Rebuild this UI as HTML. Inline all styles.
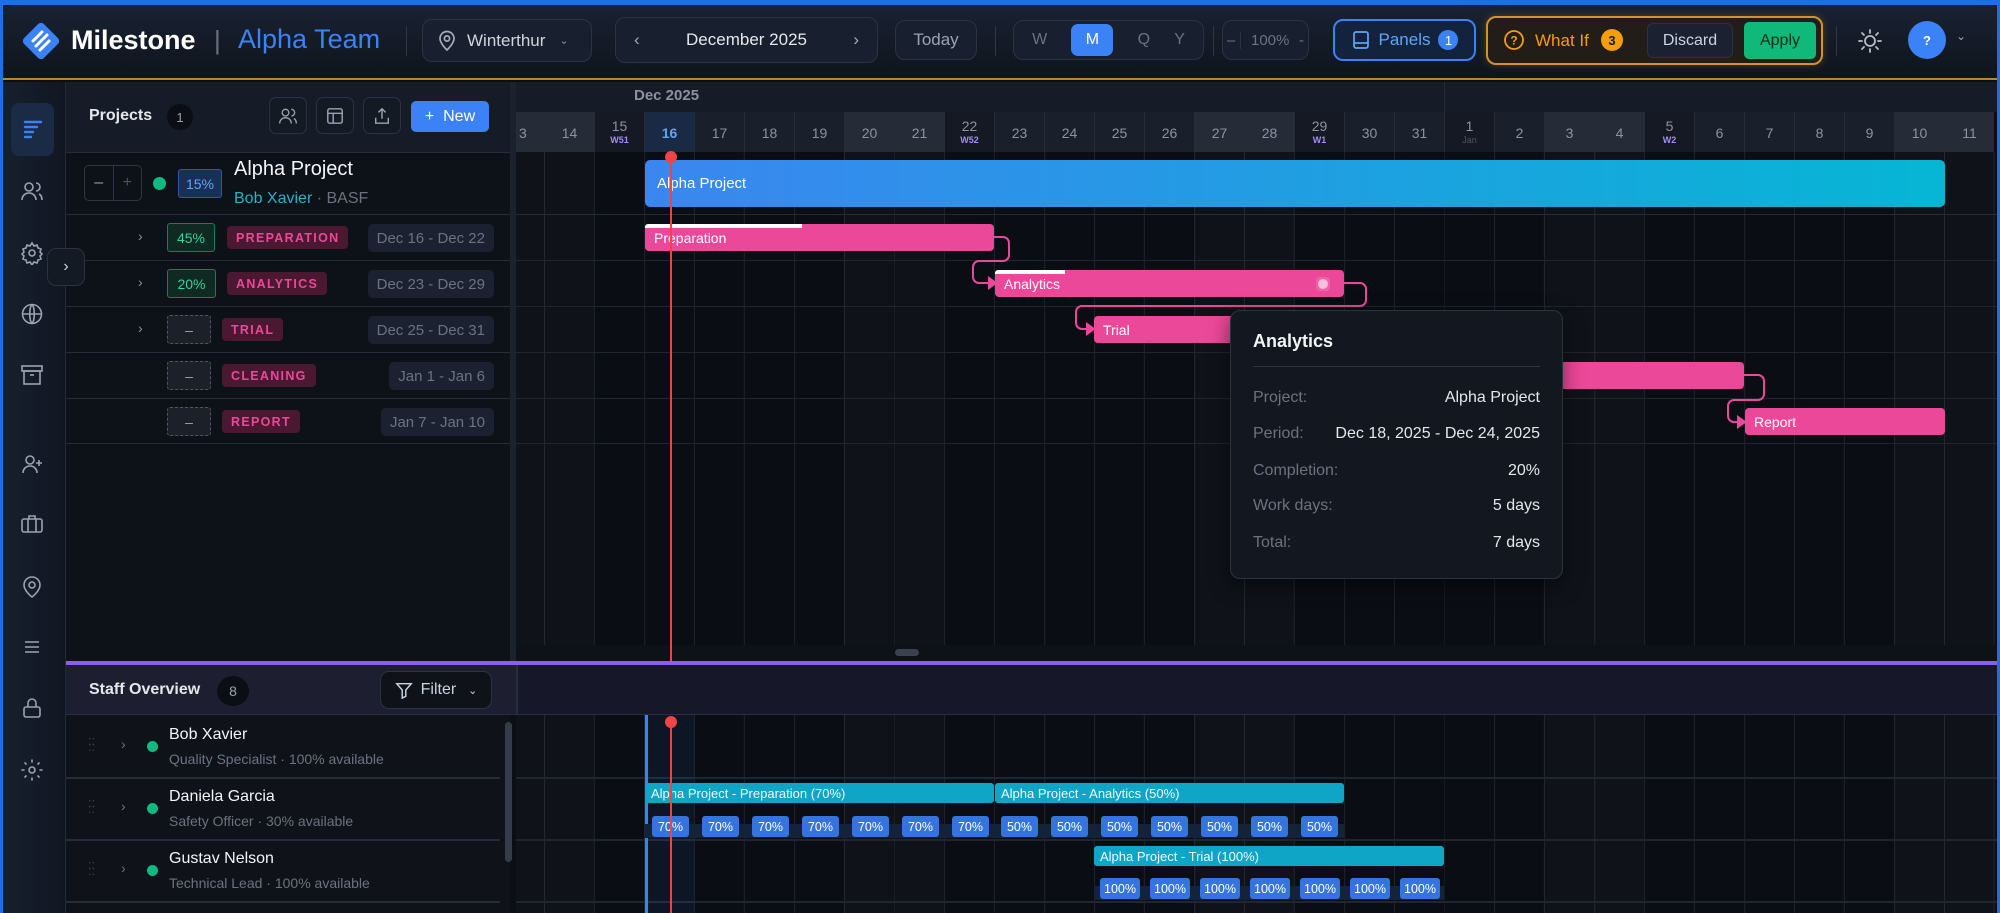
<!DOCTYPE html>
<html><head><meta charset="utf-8">
<style>
*{box-sizing:border-box;margin:0;padding:0}
body{width:2000px;height:913px;overflow:hidden;background:#0b0e14;font-family:"Liberation Sans",sans-serif;color:#e5e7eb;position:relative}
.a{position:absolute}
.btn{position:absolute;border:1px solid #2a3344;border-radius:10px;background:#182030;display:flex;align-items:center;justify-content:center;color:#d1d5db;font-size:17px}
.hc{position:absolute;top:112px;height:40px;width:50px;border-left:1px solid #262d3a;text-align:center;color:#8b93a3;font-size:14px;padding-top:13px;background:#1a202b}
.hc.we{background:#262c37}
.hc.wk{background:#141923;padding-top:6px}
.hc small{display:block;font-size:9px;color:#a78bfa;font-weight:bold;margin-top:1px}
.tag{position:absolute;height:23px;border-radius:4px;background:#4a1830;color:#ec4899;font-size:12.5px;font-weight:bold;letter-spacing:1.3px;display:flex;align-items:center;padding:0 9px}
.pct{position:absolute;height:29px;border:1px solid #16804f;border-radius:3px;background:#0f2a22;color:#34d399;font-size:14px;display:flex;align-items:center;justify-content:center}
.dash{position:absolute;height:29px;width:44px;border:1px dashed #4b5563;border-radius:3px;background:#1c2029;color:#9ca3af;display:flex;align-items:center;justify-content:center;font-size:14px}
.date{position:absolute;height:28px;border-radius:5px;background:#1b2130;color:#6b7280;font-size:15px;display:flex;align-items:center;padding:0 9px;right:1506px;white-space:nowrap}
.chev{position:absolute;left:138px;color:#8b93a3;font-size:14px}
.row{position:absolute;left:66px;width:444px;height:1px;background:#262d3a}
.bar{position:absolute;height:27px;border-radius:4px;background:#ec4899;color:#fff;font-size:14px;display:flex;align-items:center;padding-left:9px}
.sb{position:absolute;height:20px;border-radius:3px;background:#0ea5c6;color:#f0fbff;font-size:13px;display:flex;align-items:center;padding-left:6px}
.ch{position:absolute;width:37px;height:21px;border-radius:3px;background:#3574dc;color:#fff;font-size:12.5px;display:flex;align-items:center;justify-content:center}
.tt{position:absolute;left:1253px;width:287px;font-size:16px;display:flex;justify-content:space-between}
.tt span:first-child{color:#6b7280}
.sic{position:absolute;left:20px;width:24px;height:24px}
</style></head><body>
<div class="a" style="left:0;top:0;width:2000px;height:913px;border:3px solid #1f6fe0;border-top-width:5px;border-bottom:0;z-index:50;pointer-events:none"></div>
<div class="a" style="left:0;top:0;width:2000px;height:80px;background:linear-gradient(#1a2334,#0f141c);border-bottom:2px solid #b7862d"></div>
<svg class="a" style="left:20px;top:20px" width="42" height="42" viewBox="0 0 42 42"><rect x="7" y="7" width="28" height="28" rx="4" transform="rotate(45 21 21)" fill="#3b82f6"/><path d="M13 21l9-9M16 26l11-11M20 30l9-9" stroke="#fff" stroke-width="3" stroke-linecap="round"/></svg>
<div class="a" style="left:71px;top:25px;font-size:27px;font-weight:bold;color:#fff">Milestone</div>
<div class="a" style="left:214px;top:25px;font-size:26px;color:#6b7280">|</div>
<div class="a" style="left:238px;top:24px;font-size:27px;color:#3b82f6">Alpha Team</div>
<div class="a" style="left:406px;top:26px;width:1px;height:30px;background:#2f3745"></div>
<div class="btn" style="left:422px;top:19px;width:170px;height:43px;justify-content:flex-start;padding-left:14px"><svg width="20" height="22" viewBox="0 0 20 22"><path d="M10 20s7-6.5 7-11.5a7 7 0 0 0-14 0C3 13.5 10 20 10 20z" fill="none" stroke="#aab" stroke-width="1.7"/><circle cx="10" cy="8.5" r="2.6" fill="none" stroke="#aab" stroke-width="1.7"/></svg><span style="margin-left:10px">Winterthur</span><span style="margin-left:14px;font-size:11px;color:#8b93a3">&#8964;</span></div>
<div class="btn" style="left:615px;top:17px;width:263px;height:46px;justify-content:space-between;padding:0 18px"><span style="color:#aab">&#8249;</span><span style="color:#e5e7eb">December 2025</span><span style="color:#aab">&#8250;</span></div>
<div class="btn" style="left:895px;top:20px;width:82px;height:40px;color:#9ca3af">Today</div>
<div class="a" style="left:995px;top:26px;width:1px;height:30px;background:#2f3745"></div>
<div class="btn" style="left:1013px;top:20px;width:191px;height:40px;justify-content:space-around;color:#6b7280;font-size:16px;padding:0 6px"><span>W</span><span style="background:#3b82f6;color:#fff;border-radius:7px;width:42px;height:32px;display:flex;align-items:center;justify-content:center">M</span><span>Q</span><span>Y</span></div>
<div class="a" style="left:1213px;top:26px;width:1px;height:30px;background:#2f3745"></div>
<div class="btn" style="left:1222px;top:20px;width:87px;height:40px;font-size:15px;color:#6b7280;justify-content:space-between;padding:0 4px"><span style="border-right:1px solid #2a3344;padding-right:5px">&#8211;</span><span>100%</span><span>-</span></div>
<div class="btn" style="left:1333px;top:19px;width:143px;height:42px;border:2px solid #3b82f6;background:#14233d;color:#60a5fa;font-size:17px"><svg width="20" height="20" viewBox="0 0 20 20" style="margin-right:8px"><rect x="3" y="2" width="14" height="16" rx="2" fill="none" stroke="#60a5fa" stroke-width="1.7"/><path d="M3 13h14" stroke="#60a5fa" stroke-width="1.7"/></svg>Panels<span style="margin-left:8px;background:#3b82f6;color:#fff;border-radius:50%;width:20px;height:20px;font-size:13px;display:flex;align-items:center;justify-content:center">1</span></div>
<div class="a" style="left:1486px;top:16px;width:337px;height:49px;border:2px solid #d4932a;border-radius:10px;background:#221d18;box-shadow:0 0 8px rgba(212,147,42,.3)"></div>
<svg class="a" style="left:1503px;top:29px" width="22" height="22" viewBox="0 0 22 22"><circle cx="11" cy="11" r="9" fill="none" stroke="#f59e0b" stroke-width="1.8"/><text x="11" y="15.5" text-anchor="middle" font-size="12" font-weight="bold" fill="#f59e0b" font-family="Liberation Sans">?</text></svg>
<div class="a" style="left:1535px;top:31px;font-size:17px;color:#f59e0b">What If</div>
<div class="a" style="left:1601px;top:29px;width:22px;height:22px;border-radius:50%;background:#f59e0b;color:#1a1a1a;font-size:13px;font-weight:bold;display:flex;align-items:center;justify-content:center">3</div>
<div class="btn" style="left:1647px;top:23px;width:86px;height:35px;border-radius:6px;background:#1b2130;font-size:16px;color:#cbd5e1">Discard</div>
<div class="a" style="left:1744px;top:22px;width:72px;height:37px;border-radius:5px;background:#10b97a;color:#062b1c;font-size:16px;display:flex;align-items:center;justify-content:center">Apply</div>
<div class="a" style="left:1836px;top:26px;width:1px;height:30px;background:#2f3745"></div>
<svg class="a" style="left:1857px;top:28px" width="26" height="26" viewBox="0 0 26 26" stroke="#b8bec9" stroke-width="1.8" fill="none"><circle cx="13" cy="13" r="5"/><path d="M13 2v3M13 21v3M2 13h3M21 13h3M5 5l2 2M19 19l2 2M5 21l2-2M19 7l2-2" stroke-linecap="round"/></svg>
<div class="a" style="left:1908px;top:21px;width:38px;height:38px;border-radius:50%;background:#3b82f6;color:#fff;font-size:13px;font-weight:bold;display:flex;align-items:center;justify-content:center">?</div>
<div class="a" style="left:1956px;top:29px;font-size:12px;color:#9ca3af">&#8964;</div>

<div class="a" style="left:0;top:82px;width:66px;height:831px;background:linear-gradient(90deg,#17202f,#111722);border-right:1px solid #222a36"></div>
<div class="a" style="left:11px;top:103px;width:43px;height:53px;border-radius:8px;background:#1b2b45"></div>
<svg class="a" style="left:21px;top:117px" width="24" height="24" viewBox="0 0 24 24" stroke="#3b82f6" stroke-width="2.4" stroke-linecap="round"><path d="M4 5h16M4 10h12M4 15h8M4 20h6"/></svg>
<svg class="sic" style="top:179px" viewBox="0 0 24 24" fill="none" stroke="#9aa3b2" stroke-width="1.6"><circle cx="9" cy="8" r="4"/><path d="M2 21c0-4 3-7 7-7s7 3 7 7M16 4a4 4 0 0 1 0 8M19 15c2 1 3 3 3 6"/></svg>
<svg class="sic" style="top:241px" viewBox="0 0 24 24" fill="none" stroke="#9aa3b2" stroke-width="1.6"><circle cx="12" cy="12" r="3"/><path d="M12 2l2 3 3-1 1 3 3 1-1 3 2 2-2 2 1 3-3 1-1 3-3-1-2 3-2-3-3 1-1-3-3-1 1-3-2-2 2-2-1-3 3-1 1-3 3 1z"/></svg>
<svg class="sic" style="top:302px" viewBox="0 0 24 24" fill="none" stroke="#9aa3b2" stroke-width="1.6"><circle cx="12" cy="12" r="9.5"/><path d="M2.5 12h19M12 2.5c3 3 3 16 0 19M12 2.5c-3 3-3 16 0 19"/></svg>
<svg class="sic" style="top:363px" viewBox="0 0 24 24" fill="none" stroke="#9aa3b2" stroke-width="1.6"><rect x="2" y="3" width="20" height="5"/><rect x="4" y="8" width="16" height="13"/><path d="M10 12h4"/></svg>
<svg class="sic" style="top:452px" viewBox="0 0 24 24" fill="none" stroke="#9aa3b2" stroke-width="1.6"><circle cx="10" cy="8" r="4"/><path d="M3 21c0-4 3-7 7-7s7 3 7 7M19 8v6M16 11h6"/></svg>
<svg class="sic" style="top:512px" viewBox="0 0 24 24" fill="none" stroke="#9aa3b2" stroke-width="1.6"><rect x="2" y="7" width="20" height="13" rx="2"/><path d="M9 7V4h6v3M8 7v13M16 7v13"/></svg>
<svg class="sic" style="top:575px" viewBox="0 0 24 24" fill="none" stroke="#9aa3b2" stroke-width="1.6"><path d="M12 22s8-6 8-12a8 8 0 0 0-16 0c0 6 8 12 8 12z"/><circle cx="12" cy="10" r="3"/></svg>
<svg class="sic" style="top:635px" viewBox="0 0 24 24" fill="none" stroke="#9aa3b2" stroke-width="1.6"><path d="M5 7h14M5 12h14M5 17h14"/></svg>
<svg class="sic" style="top:696px" viewBox="0 0 24 24" fill="none" stroke="#9aa3b2" stroke-width="1.6"><rect x="4" y="11" width="16" height="10" rx="2"/><path d="M8 11V7a4 4 0 0 1 8 0v4"/></svg>
<svg class="sic" style="top:758px" viewBox="0 0 24 24" fill="none" stroke="#9aa3b2" stroke-width="1.6"><circle cx="12" cy="12" r="3"/><path d="M12 2v2M12 20v2M2 12h2M20 12h2M5 5l1 1M18 18l1 1M5 19l1-1M18 6l1-1" stroke-linecap="round"/></svg>

<div class="a" style="left:66px;top:82px;width:446px;height:70px;background:#161c27"></div>
<div class="a" style="left:66px;top:152px;width:446px;height:509px;background:#0d1118"></div>
<div class="a" style="left:510px;top:82px;width:6px;height:583px;background:#1c222d"></div>
<div class="a" style="left:89px;top:107px;font-size:16px;font-weight:bold;color:#e5e7eb">Projects</div>
<div class="a" style="left:167px;top:104px;width:26px;height:26px;border-radius:50%;background:#0b0e14;color:#9ca3af;font-size:13px;display:flex;align-items:center;justify-content:center">1</div>
<div class="btn" style="left:269px;top:97px;width:38px;height:37px;background:#141a24;border-radius:7px"><svg width="20" height="20" viewBox="0 0 24 24" fill="none" stroke="#9aa3b2" stroke-width="1.6"><circle cx="9" cy="8" r="4"/><path d="M2 21c0-4 3-7 7-7s7 3 7 7M16 4a4 4 0 0 1 0 8M19 15c2 1 3 3 3 6"/></svg></div>
<div class="btn" style="left:316px;top:97px;width:38px;height:37px;background:#141a24;border-radius:7px"><svg width="18" height="18" viewBox="0 0 20 20" fill="none" stroke="#9aa3b2" stroke-width="1.6"><rect x="2" y="2" width="16" height="16" rx="2"/><path d="M2 7h16M8 7v11"/></svg></div>
<div class="btn" style="left:363px;top:97px;width:38px;height:37px;background:#141a24;border-radius:7px"><svg width="18" height="18" viewBox="0 0 20 20" fill="none" stroke="#9aa3b2" stroke-width="1.6"><path d="M10 13V2M6 6l4-4 4 4M3 12v6h14v-6"/></svg></div>
<div class="a" style="left:411px;top:101px;width:78px;height:31px;border-radius:5px;background:#3b82f6;color:#fff;font-size:16px;display:flex;align-items:center;justify-content:center">+&nbsp; New</div>
<div class="row" style="top:152px"></div>
<div class="a" style="left:84px;top:165px;width:58px;height:36px;border:1px solid #2e3644;border-radius:5px;display:flex;color:#9ca3af;font-size:16px"><span style="flex:1;text-align:center;line-height:33px;border-right:1px solid #2e3644">&#8211;</span><span style="flex:1;text-align:center;line-height:33px;color:#4b5563">+</span></div>
<div class="a" style="left:153px;top:177px;width:13px;height:13px;border-radius:50%;background:#10b981"></div>
<div class="a" style="left:178px;top:169px;width:44px;height:29px;border:1px solid #2d5aa8;border-radius:3px;background:#1a2f55;color:#60a5fa;font-size:14px;display:flex;align-items:center;justify-content:center">15%</div>
<div class="a" style="left:234px;top:158px;font-size:20px;color:#f3f4f6">Alpha Project</div>
<div class="a" style="left:234px;top:190px;font-size:16px;color:#22b5c8">Bob Xavier <span style="color:#6b7280">· BASF</span></div>
<div class="row" style="top:214px"></div>
<div class="row" style="top:260px"></div>
<div class="row" style="top:306px"></div>
<div class="row" style="top:352px"></div>
<div class="row" style="top:398px"></div>
<div class="row" style="top:443px"></div>
<div class="chev" style="top:228px">&#8250;</div>
<div class="chev" style="top:274px">&#8250;</div>
<div class="chev" style="top:320px">&#8250;</div>
<div class="pct" style="left:167px;top:223px;width:48px">45%</div>
<div class="pct" style="left:167px;top:269px;width:49px">20%</div>
<div class="dash" style="left:167px;top:315px">&#8211;</div>
<div class="dash" style="left:167px;top:361px">&#8211;</div>
<div class="dash" style="left:167px;top:407px">&#8211;</div>
<div class="tag" style="left:227px;top:226px">PREPARATION</div>
<div class="tag" style="left:227px;top:272px">ANALYTICS</div>
<div class="tag" style="left:222px;top:318px">TRIAL</div>
<div class="tag" style="left:222px;top:364px">CLEANING</div>
<div class="tag" style="left:222px;top:410px">REPORT</div>
<div class="date" style="top:224px">Dec 16 - Dec 22</div>
<div class="date" style="top:270px">Dec 23 - Dec 29</div>
<div class="date" style="top:316px">Dec 25 - Dec 31</div>
<div class="date" style="top:362px">Jan 1 - Jan 6</div>
<div class="date" style="top:408px">Jan 7 - Jan 10</div>
<div class="btn" style="left:47px;top:248px;width:38px;height:38px;background:#141a24;border-radius:9px;font-size:16px;color:#d1d5db">&#8250;</div>

<div class="a" style="left:516px;top:152px;width:1484px;height:761px;background:#0a0d13 repeating-linear-gradient(90deg,#1d232e 0 1px,transparent 1px 50px);background-position:28px 0;overflow:hidden"></div>
<div class="a" style="left:516px;top:152px;width:78px;height:761px;background:rgba(255,255,255,.025)"></div>
<div class="a" style="left:844px;top:152px;width:100px;height:761px;background:rgba(255,255,255,.025)"></div>
<div class="a" style="left:1194px;top:152px;width:100px;height:761px;background:rgba(255,255,255,.025)"></div>
<div class="a" style="left:1544px;top:152px;width:100px;height:761px;background:rgba(255,255,255,.025)"></div>
<div class="a" style="left:1894px;top:152px;width:100px;height:761px;background:rgba(255,255,255,.025)"></div>
<div class="a" style="left:516px;top:214px;width:1484px;height:1px;background:#252c38"></div>
<div class="a" style="left:516px;top:260px;width:1484px;height:1px;background:#1f2632"></div>
<div class="a" style="left:516px;top:306px;width:1484px;height:1px;background:#1f2632"></div>
<div class="a" style="left:516px;top:352px;width:1484px;height:1px;background:#1f2632"></div>
<div class="a" style="left:516px;top:398px;width:1484px;height:1px;background:#1f2632"></div>
<div class="a" style="left:516px;top:443px;width:1484px;height:1px;background:#1f2632"></div>
<div class="a" style="left:516px;top:645px;width:1484px;height:16px;background:#0d1118"></div>
<div class="a" style="left:895px;top:649px;width:24px;height:7px;border-radius:4px;background:#3a4250"></div>
<div class="a" style="left:516px;top:82px;width:1484px;height:30px;background:#161c27"></div>
<div class="a" style="left:1444px;top:82px;width:1px;height:30px;background:#262d3a"></div>
<div class="a" style="left:634px;top:87px;font-size:15px;font-weight:bold;color:#8b93a3">Dec 2025</div>
<div style="position:absolute;left:0;top:0">
<div class="hc we" style="left:516px;width:28px;text-align:left;padding-left:2px">3</div>
<div class="hc we" style="left:544px">14</div>
<div class="hc wk" style="left:594px">15<small>W51</small></div>
<div class="hc" style="left:644px;background:#1b2a44;color:#60a5fa;font-weight:bold">16</div>
<div class="hc" style="left:694px">17</div>
<div class="hc" style="left:744px">18</div>
<div class="hc" style="left:794px">19</div>
<div class="hc we" style="left:844px">20</div>
<div class="hc we" style="left:894px">21</div>
<div class="hc wk" style="left:944px">22<small>W52</small></div>
<div class="hc" style="left:994px">23</div>
<div class="hc" style="left:1044px">24</div>
<div class="hc" style="left:1094px">25</div>
<div class="hc" style="left:1144px">26</div>
<div class="hc we" style="left:1194px">27</div>
<div class="hc we" style="left:1244px">28</div>
<div class="hc wk" style="left:1294px">29<small>W1</small></div>
<div class="hc" style="left:1344px">30</div>
<div class="hc" style="left:1394px">31</div>
<div class="hc wk" style="left:1444px">1<small style="color:#4b5563;font-weight:normal">Jan</small></div>
<div class="hc" style="left:1494px">2</div>
<div class="hc we" style="left:1544px">3</div>
<div class="hc we" style="left:1594px">4</div>
<div class="hc wk" style="left:1644px">5<small>W2</small></div>
<div class="hc" style="left:1694px">6</div>
<div class="hc" style="left:1744px">7</div>
<div class="hc" style="left:1794px">8</div>
<div class="hc" style="left:1844px">9</div>
<div class="hc we" style="left:1894px">10</div>
<div class="hc we" style="left:1944px">11</div>
</div>
<div class="a" style="left:645px;top:160px;width:1300px;height:47px;border-radius:5px;background:linear-gradient(90deg,#3b86f0,#06b6d4);color:#fff;font-size:15px;display:flex;align-items:center;padding-left:12px">Alpha Project</div>
<div class="bar" style="left:645px;top:224px;width:349px">Preparation</div>
<div class="a" style="left:645px;top:224px;width:157px;height:4px;background:#fff;border-radius:3px 0 0 0"></div>
<div class="bar" style="left:995px;top:270px;width:349px">Analytics</div>
<div class="a" style="left:995px;top:270px;width:70px;height:4px;background:#fff;border-radius:3px 0 0 0"></div>
<div class="a" style="left:1316px;top:277px;width:14px;height:14px;border-radius:4px;background:rgba(255,255,255,.15)"><div style="margin:2px;width:10px;height:10px;border-radius:50%;background:#f9c0dc"></div></div>
<div class="bar" style="left:1094px;top:316px;width:350px">Trial</div>
<div class="bar" style="left:1444px;top:362px;width:300px"></div>
<div class="bar" style="left:1745px;top:408px;width:200px">Report</div>
<svg class="a" style="left:0;top:0" width="2000" height="913" fill="none" stroke="#ec4899" stroke-width="2">
<path d="M994 237h9a6 6 0 0 1 6 6v12a6 6 0 0 1-6 6h-24a6 6 0 0 0-6 6v10a6 6 0 0 0 6 6h12"/><path d="M989 278l7 5-7 5z" fill="#ec4899"/>
<path d="M1344 283h16a6 6 0 0 1 6 6v11a6 6 0 0 1-6 6h-278a6 6 0 0 0-6 6v11a6 6 0 0 0 6 6h8"/><path d="M1087 324l7 5-7 5z" fill="#ec4899"/>
<path d="M1744 375h14a6 6 0 0 1 6 6v13a6 6 0 0 1-6 6h-24a6 6 0 0 0-6 6v10a6 6 0 0 0 6 6h8"/><path d="M1738 417l7 5-7 5z" fill="#ec4899"/>
</svg>
<div class="a" style="left:1230px;top:310px;width:333px;height:269px;border:1px solid #2c3340;border-radius:10px;background:#131820;box-shadow:0 6px 20px rgba(0,0,0,.5)"></div>
<div class="a" style="left:1253px;top:331px;font-size:18px;font-weight:bold;color:#f3f4f6">Analytics</div>
<div class="a" style="left:1253px;top:366px;width:287px;height:1px;background:#2e3542"></div>
<div class="tt" style="top:389px"><span>Project:</span><span>Alpha Project</span></div>
<div class="tt" style="top:425px"><span>Period:</span><span>Dec 18, 2025 - Dec 24, 2025</span></div>
<div class="tt" style="top:462px"><span>Completion:</span><span>20%</span></div>
<div class="tt" style="top:497px"><span>Work days:</span><span>5 days</span></div>
<div class="tt" style="top:534px"><span>Total:</span><span>7 days</span></div>

<div class="a" style="left:66px;top:661px;width:1934px;height:4px;background:#8b5cf6"></div>
<div class="a" style="left:66px;top:665px;width:450px;height:50px;background:#1d1f30;border-bottom:1px solid #2a2f3e"></div>
<div class="a" style="left:516px;top:665px;width:1484px;height:50px;background:#17172a;border-bottom:1px solid #2a2f3e;border-left:2px solid #262d3a"></div>
<div class="a" style="left:89px;top:681px;font-size:16px;font-weight:bold;color:#e5e7eb">Staff Overview</div>
<div class="a" style="left:217px;top:676px;width:32px;height:30px;border-radius:50%;background:#0b0e14;color:#9ca3af;font-size:14px;display:flex;align-items:center;justify-content:center">8</div>
<div class="btn" style="left:380px;top:671px;width:112px;height:38px;background:#0f1219;border-radius:9px;font-size:16px;color:#cbd5e1"><svg width="18" height="18" viewBox="0 0 20 20" fill="none" stroke="#cbd5e1" stroke-width="1.6" style="margin-right:8px"><path d="M2 3h16l-6 7v7l-4 2v-9z"/></svg>Filter<span style="margin-left:12px;font-size:11px">&#8964;</span></div>
<div class="a" style="left:66px;top:715px;width:444px;height:198px;background:#0f1319"></div>
<div class="a" style="left:66px;top:777px;width:434px;height:2px;background:#262d3a"></div>
<div class="a" style="left:66px;top:839px;width:434px;height:2px;background:#262d3a"></div>
<div class="a" style="left:66px;top:901px;width:434px;height:2px;background:#262d3a"></div>
<div class="a" style="left:505px;top:722px;width:7px;height:140px;border-radius:4px;background:#353c49"></div>
<div class="a" style="left:516px;top:777px;width:1484px;height:2px;background:#1f2632"></div>
<div class="a" style="left:516px;top:839px;width:1484px;height:2px;background:#1f2632"></div>
<div class="a" style="left:516px;top:901px;width:1484px;height:2px;background:#1f2632"></div>
<div class="a" style="left:88px;top:738px;font-size:13px;color:#3a414d;line-height:6px">::<br>::</div>
<div class="a" style="left:88px;top:800px;font-size:13px;color:#3a414d;line-height:6px">::<br>::</div>
<div class="a" style="left:88px;top:862px;font-size:13px;color:#3a414d;line-height:6px">::<br>::</div>
<div class="a" style="left:121px;top:736px;color:#6b7280;font-size:14px">&#8250;</div>
<div class="a" style="left:121px;top:798px;color:#6b7280;font-size:14px">&#8250;</div>
<div class="a" style="left:121px;top:860px;color:#6b7280;font-size:14px">&#8250;</div>
<div class="a" style="left:147px;top:741px;width:11px;height:11px;border-radius:50%;background:#10b981"></div>
<div class="a" style="left:147px;top:803px;width:11px;height:11px;border-radius:50%;background:#10b981"></div>
<div class="a" style="left:147px;top:865px;width:11px;height:11px;border-radius:50%;background:#10b981"></div>
<div class="a" style="left:169px;top:726px;font-size:16px;color:#f3f4f6">Bob Xavier</div>
<div class="a" style="left:169px;top:751px;font-size:14px;color:#6b7280">Quality Specialist · 100% available</div>
<div class="a" style="left:169px;top:788px;font-size:16px;color:#f3f4f6">Daniela Garcia</div>
<div class="a" style="left:169px;top:813px;font-size:14px;color:#6b7280">Safety Officer · 30% available</div>
<div class="a" style="left:169px;top:850px;font-size:16px;color:#f3f4f6">Gustav Nelson</div>
<div class="a" style="left:169px;top:875px;font-size:14px;color:#6b7280">Technical Lead · 100% available</div>
<div class="a" style="left:644px;top:715px;width:50px;height:198px;background:rgba(59,130,246,.08)"></div>
<div class="a" style="left:645px;top:715px;width:3px;height:198px;background:#3b82f6"></div>
<div class="sb" style="left:645px;top:783px;width:349px">Alpha Project - Preparation (70%)</div>
<div class="sb" style="left:995px;top:783px;width:349px">Alpha Project - Analytics (50%)</div>
<div class="a" style="left:645px;top:824px;width:699px;height:14px;background:#15233a"></div>
<div class="ch" style="left:652px;top:816px">70%</div><div class="ch" style="left:702px;top:816px">70%</div><div class="ch" style="left:752px;top:816px">70%</div><div class="ch" style="left:802px;top:816px">70%</div><div class="ch" style="left:852px;top:816px">70%</div><div class="ch" style="left:902px;top:816px">70%</div><div class="ch" style="left:952px;top:816px">70%</div>
<div class="ch" style="left:1001px;top:816px">50%</div><div class="ch" style="left:1051px;top:816px">50%</div><div class="ch" style="left:1101px;top:816px">50%</div><div class="ch" style="left:1151px;top:816px">50%</div><div class="ch" style="left:1201px;top:816px">50%</div><div class="ch" style="left:1251px;top:816px">50%</div><div class="ch" style="left:1301px;top:816px">50%</div>
<div class="sb" style="left:1094px;top:846px;width:350px">Alpha Project - Trial (100%)</div>
<div class="a" style="left:1094px;top:886px;width:350px;height:14px;background:#15233a"></div>
<div class="ch" style="left:1100px;top:878px;width:40px">100%</div><div class="ch" style="left:1150px;top:878px;width:40px">100%</div><div class="ch" style="left:1200px;top:878px;width:40px">100%</div><div class="ch" style="left:1250px;top:878px;width:40px">100%</div><div class="ch" style="left:1300px;top:878px;width:40px">100%</div><div class="ch" style="left:1350px;top:878px;width:40px">100%</div><div class="ch" style="left:1400px;top:878px;width:40px">100%</div>
<div class="a" style="left:670px;top:156px;width:2px;height:505px;background:#ef4444"></div>
<div class="a" style="left:665px;top:151px;width:12px;height:12px;border-radius:50%;background:#ef4444"></div>
<div class="a" style="left:670px;top:722px;width:2px;height:191px;background:#ef4444"></div>
<div class="a" style="left:665px;top:716px;width:12px;height:12px;border-radius:50%;background:#ef4444"></div>
</body></html>
